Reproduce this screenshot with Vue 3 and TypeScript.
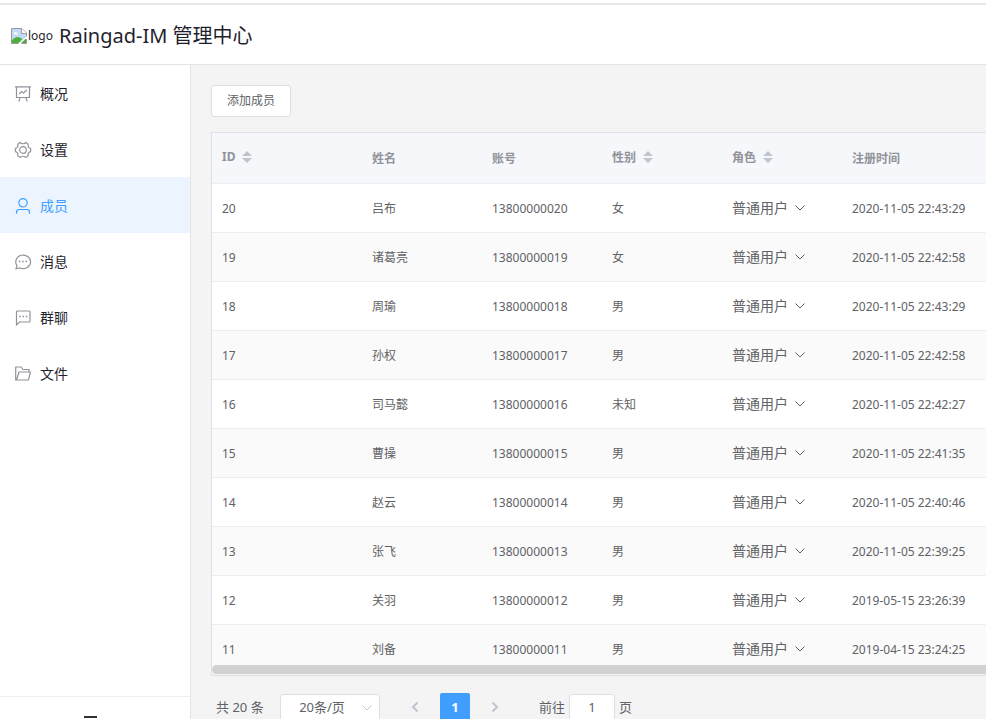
<script setup lang="ts">
import { ref } from 'vue'

interface MenuItem {
  key: string
  label: string
}

interface Member {
  id: number
  name: string
  sex: string
  created: string
}

interface Column {
  label: string
  sortable: boolean
}

const menu: MenuItem[] = [
  { key: 'board', label: '概况' },
  { key: 'setting', label: '设置' },
  { key: 'user', label: '成员' },
  { key: 'round', label: '消息' },
  { key: 'square', label: '群聊' },
  { key: 'folder', label: '文件' },
]
const active = ref('user')

const columns: Column[] = [
  { label: 'ID', sortable: true },
  { label: '姓名', sortable: false },
  { label: '账号', sortable: false },
  { label: '性别', sortable: true },
  { label: '角色', sortable: true },
  { label: '注册时间', sortable: false },
]

const members: Member[] = [
  { id: 20, name: '吕布', sex: '女', created: '2020-11-05 22:43:29' },
  { id: 19, name: '诸葛亮', sex: '女', created: '2020-11-05 22:42:58' },
  { id: 18, name: '周瑜', sex: '男', created: '2020-11-05 22:43:29' },
  { id: 17, name: '孙权', sex: '男', created: '2020-11-05 22:42:58' },
  { id: 16, name: '司马懿', sex: '未知', created: '2020-11-05 22:42:27' },
  { id: 15, name: '曹操', sex: '男', created: '2020-11-05 22:41:35' },
  { id: 14, name: '赵云', sex: '男', created: '2020-11-05 22:40:46' },
  { id: 13, name: '张飞', sex: '男', created: '2020-11-05 22:39:25' },
  { id: 12, name: '关羽', sex: '男', created: '2019-05-15 23:26:39' },
  { id: 11, name: '刘备', sex: '男', created: '2019-04-15 23:24:25' },
]

const pageSize = ref(20)
const page = ref('1')
</script>

<template>
  <div class="page">
    <div class="topline"></div>
    <header class="header">
      <span class="logo">
        <svg width="16" height="16" viewBox="0 0 16 16" aria-hidden="true">
          <path d="M0.5 0.5H11L15.500 5V15.500H0.500Z" fill="#fff" />
          <path d="M1 1H10.500V5.500H15V9L8 15H1Z" fill="#c3d9f7" />
          <path d="M3 5.500C3 4 5 3.500 5.500 4.500C7 4.500 7 6.500 6 6.500H3.500C2.500 6.500 2.500 5.500 3 5.500Z" fill="#fff" />
          <path d="M1 15V12.500C3 9.500 6.500 8 9.500 10L11.500 11L7.500 15Z" fill="#4caf3a" />
          <path d="M10 15L15 10.500V15Z" fill="#4caf3a" />
          <path d="M7.500 15.500H0.500V0.500H11L15.500 5V8.500M15.500 11V15.500H10.500" fill="none" stroke="#9a9a9a" />
          <path d="M10.500 0.500V5.500H15.500" fill="#fff" stroke="#9a9a9a" />
        </svg>
        <span>logo</span>
      </span>
      <h1 class="title">Raingad-IM 管理中心</h1>
    </header>

    <div class="body">
      <aside class="sidebar">
        <nav class="menu">
          <a
            v-for="item in menu"
            :key="item.key"
            href="#"
            class="menu-item"
            :class="{ active: item.key === active }"
            @click.prevent="active = item.key"
          >
            <svg class="menu-icon" viewBox="0 0 16 16" aria-hidden="true">
              <template v-if="item.key === 'board'">
                <path d="M0 0.800H16M1.500 0.800V11.500H14.500V0.800M5 12L3.800 15.500M11 12L12.200 15.500" />
                <path d="M4.300 8L6.500 5.500L8.700 7L11.700 4" />
              </template>
              <template v-else-if="item.key === 'setting'">
                <path d="M15.500 9.600Q12.500 10.600 13.200 13.700Q12.100 15.100 10.400 15.300Q8 13.200 5.600 15.300Q3.900 15.100 2.800 13.700Q3.500 10.600 0.500 9.600Q-0.200 8 0.500 6.400Q3.500 5.400 2.800 2.300Q3.900 0.900 5.600 0.700Q8 2.800 10.400 0.700Q12.100 0.900 13.200 2.300Q12.500 5.400 15.500 6.400Q16.200 8 15.500 9.600Z" />
                <circle cx="8" cy="8" r="3.300" />
              </template>
              <template v-else-if="item.key === 'user'">
                <circle cx="8" cy="4.800" r="4.200" />
                <path d="M1.500 15.800V14Q1.500 11.500 4.200 11.500H11.800Q14.500 11.500 14.500 14V15.800" />
              </template>
              <template v-else-if="item.key === 'round'">
                <path d="M1 14.800L2 11.600A7.400 6.800 0 1 1 5 14Z" />
                <path class="dots" d="M3.900 7.500h1.600M7.200 7.500h1.600M10.500 7.500h1.600" />
              </template>
              <template v-else-if="item.key === 'square'">
                <path d="M1.500 14.800V2Q1.500 1 2.500 1H14Q15 1 15 2V11Q15 12 14 12H4.500Z" />
                <path class="dots" d="M4.200 6.500h1.600M7.500 6.500h1.600M10.800 6.500h1.600" />
              </template>
              <template v-else>
                <path d="M1.500 14H13.500L15.400 6H4L1.500 14H0.700V1H6L8 3.500H14V6" />
              </template>
            </svg>
            <span>{{ item.label }}</span>
          </a>
        </nav>
        <button type="button" class="collapse" aria-label="收起">
          <svg width="22" height="18" viewBox="0 0 22 18" aria-hidden="true">
            <path d="M0 1H13M0 9H13M0 17H13M22 5V13L17 9Z" />
          </svg>
        </button>
      </aside>

      <main class="main">
        <button type="button" class="add">添加成员</button>

        <div class="table-box">
          <table class="table">
            <colgroup>
              <col class="col-id" />
              <col class="col" />
              <col class="col" />
              <col class="col" />
              <col class="col" />
              <col />
            </colgroup>
            <thead>
              <tr>
                <th v-for="col in columns" :key="col.label">
                  <span class="th-text" :class="{ sortable: col.sortable }">
                    {{ col.label }}
                    <svg v-if="col.sortable" width="10" height="12" viewBox="0 0 10 12" aria-hidden="true">
                      <path d="M5 0L10 5H0ZM5 12L10 7H0Z" fill="#c0c4cc" />
                    </svg>
                  </span>
                </th>
              </tr>
            </thead>
            <tbody>
              <tr v-for="m in members" :key="m.id">
                <td>{{ m.id }}</td>
                <td>{{ m.name }}</td>
                <td>138000000{{ m.id }}</td>
                <td>{{ m.sex }}</td>
                <td>
                  <button type="button" class="role">
                    普通用户
                    <svg width="10" height="6" viewBox="0 0 10 6" aria-hidden="true">
                      <path d="M0.500 0.500L5 5L9.500 0.500" fill="none" stroke="currentColor" />
                    </svg>
                  </button>
                </td>
                <td>{{ m.created }}</td>
              </tr>
            </tbody>
          </table>
          <div class="scrollbar"></div>
        </div>

        <div class="pagination">
          <span class="total">共 20 条</span>
          <span class="size">
            <select v-model="pageSize" aria-label="每页条数">
              <option :value="20">20条/页</option>
              <option :value="50">50条/页</option>
            </select>
            <svg width="10" height="6" viewBox="0 0 10 6" aria-hidden="true">
              <path d="M0.500 0.500L5 5L9.500 0.500" fill="none" stroke="#c0c4cc" />
            </svg>
          </span>
          <div class="pager">
            <button type="button" class="page-btn" disabled aria-label="上一页">
              <svg width="8" height="10" viewBox="0 0 8 10" aria-hidden="true"><path d="M6.500 0.500L2 5L6.500 9.500" /></svg>
            </button>
            <button type="button" class="page-btn current">1</button>
            <button type="button" class="page-btn" disabled aria-label="下一页">
              <svg width="8" height="10" viewBox="0 0 8 10" aria-hidden="true"><path d="M1.500 0.500L6 5L1.500 9.500" /></svg>
            </button>
          </div>
          <label class="jump"><span>前往</span><input v-model="page" type="text" /><span>页</span></label>
        </div>
      </main>
    </div>
  </div>
</template>

<style>
html {
  scrollbar-width: none;
}
body {
  overflow-x: hidden;
}
</style>

<style scoped>
.page,
.page * {
  box-sizing: border-box;
}
.page {
  display: flex;
  flex-direction: column;
  min-height: 100vh;
  font-family: 'Noto Sans', 'Noto Sans CJK SC', sans-serif;
  font-size: 14px;
  color: #1f1f2e;
  background: #fff;
}
button,
input,
select {
  font-family: inherit;
}
.topline {
  height: 5px;
  border-bottom: 2px solid #e6e6e6;
}
.header {
  display: flex;
  align-items: center;
  gap: 6px;
  height: 60px;
  padding: 2px 11px 0;
  border-bottom: 1px solid #e4e4e4;
}
.logo {
  display: flex;
  align-items: center;
  gap: 1px;
  font-size: 12px;
  line-height: 16px;
}
.title {
  margin: 0;
  font-size: 20px;
  font-weight: 400;
  line-height: 28px;
  white-space: nowrap;
}
.body {
  display: flex;
  flex: 1;
}
.sidebar {
  display: flex;
  flex-direction: column;
  flex: none;
  width: 191px;
  border-right: 1px solid #e4e4e4;
}
.menu {
  flex: 1;
}
.menu-item {
  display: flex;
  align-items: center;
  gap: 9px;
  height: 56px;
  padding-left: 15px;
  color: #1f1f2e;
  text-decoration: none;
}
.menu-icon {
  width: 16px;
  height: 18px;
  padding-top: 2px;
  overflow: visible;
  fill: none;
  stroke: #909399;
  stroke-width: 1.2;
}
.dots {
  stroke-width: 1.6;
}
.menu-item.active {
  color: #409eff;
  background: #ecf5ff;
}
.active .menu-icon {
  stroke: #409eff;
}
.collapse {
  display: flex;
  align-items: center;
  justify-content: center;
  height: 57px;
  padding: 0;
  border: 0;
  border-top: 1px solid #ebeef5;
  background: #fff;
}
.collapse path {
  fill: #303133;
  stroke: #303133;
  stroke-width: 2;
}
.main {
  flex: 1;
  min-width: 0;
  padding: 20px 0 30px 20px;
  background: #f4f4f4;
}
.add {
  display: block;
  height: 32px;
  padding: 0 15px 2px;
  border: 1px solid #dcdfe6;
  border-radius: 3px;
  font-size: 12px;
  color: #606266;
  background: #fff;
}
.table-box {
  position: relative;
  margin-top: 15px;
  padding-bottom: 1px;
  border: 1px solid #dfe1e6;
  border-right: 0;
  overflow: hidden;
}
.table {
  width: 100%;
  table-layout: fixed;
  border-collapse: separate;
  border-spacing: 0;
  font-size: 12px;
  color: #606266;
}
.col-id {
  width: 150px;
}
.col {
  width: 120px;
}
th,
td {
  padding: 0 10px;
  border-bottom: 1px solid #ebeef5;
  text-align: left;
  white-space: nowrap;
}
th {
  height: 51px;
  color: #909399;
  font-weight: 700;
  background: #f5f7fb;
}
td {
  height: 49px;
  background: #fff;
}
tr:nth-child(even) td {
  background: #fafafa;
}
.th-text {
  display: flex;
  align-items: center;
  gap: 7px;
}
.sortable {
  padding-bottom: 3px;
}
.role {
  display: flex;
  align-items: center;
  gap: 7px;
  padding: 0 0 2px;
  border: 0;
  font-size: 14px;
  color: #606266;
  background: none;
}
.role svg {
  margin-top: 2px;
}
.scrollbar {
  position: absolute;
  right: 0;
  bottom: 1px;
  left: 0;
  height: 9px;
  border-radius: 5px 0 0 5px;
  background: #d1d1d1;
}
.pagination {
  display: flex;
  align-items: center;
  height: 30px;
  margin-top: 17px;
  padding-left: 5px;
  font-size: 13px;
  color: #606266;
  white-space: nowrap;
}
.total {
  min-width: 64px;
}
.total,
.jump span {
  padding-bottom: 3px;
}
.size {
  position: relative;
}
.size svg {
  position: absolute;
  top: 11px;
  right: 8px;
  pointer-events: none;
}
.size select {
  display: block;
  width: 100px;
  height: 28px;
  padding: 0 16px 2px 0;
  border: 1px solid #dcdfe6;
  border-radius: 3px;
  appearance: none;
  font-size: 13px;
  text-align: center;
  text-align-last: center;
  color: #606266;
  background: #fff;
}
.pager {
  display: flex;
  gap: 10px;
  margin: 0 29px 0 20px;
}
.page-btn {
  display: flex;
  align-items: center;
  justify-content: center;
  width: 30px;
  height: 30px;
  padding: 0 0 2px;
  border: 0;
  border-radius: 2px;
  font-size: 13px;
  font-weight: 700;
  background: #f4f4f5;
}
.page-btn path {
  fill: none;
  stroke: #c0c4cc;
  stroke-width: 2;
}
.page-btn.current {
  color: #fff;
  background: #409eff;
}
.jump {
  display: flex;
  align-items: center;
  gap: 4px;
}
.jump input {
  width: 46px;
  height: 28px;
  padding: 0 3px 2px;
  border: 1px solid #dcdfe6;
  border-radius: 3px;
  font-size: 13px;
  text-align: center;
  color: #606266;
  background: #fff;
}
</style>
